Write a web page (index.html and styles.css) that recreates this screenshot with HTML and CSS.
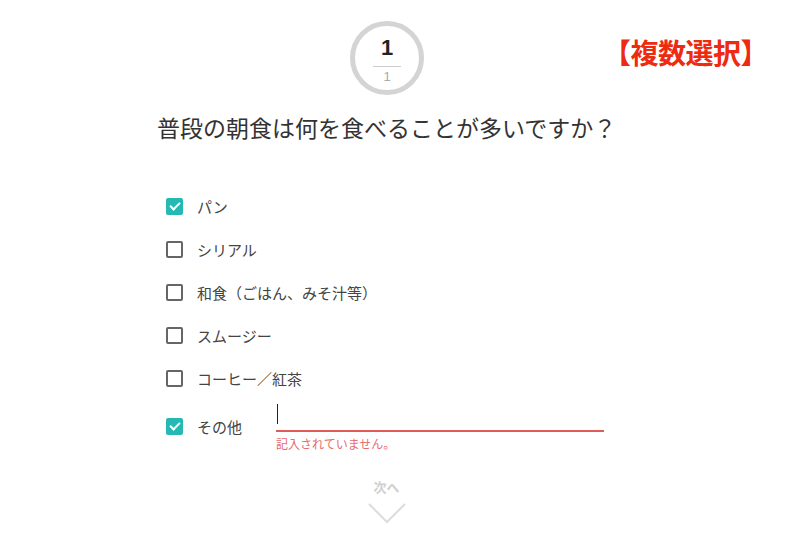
FILE: index.html
```html
<!DOCTYPE html>
<html lang="ja">

<head>
    <meta charset="UTF-8">
    <meta name="viewport" content="width=device-width, initial-scale=1.0">
    <title>Document</title>
    <link rel="stylesheet" href="styles.css">
</head>

<body>
    <div class="page">
        <div class="top">
            <div class="step">
                <span class="step_now">1</span>
                <span class="step_all">1</span>
            </div>
            <span class="multi">【複数選択】</span>
        </div>
        <h1 class="question">普段の朝食は何を食べることが多いですか？</h1>
        <ul class="choices">
            <li><span class="box on"></span>パン</li>
            <li><span class="box"></span>シリアル</li>
            <li><span class="box"></span>和食（ごはん、みそ汁等）</li>
            <li><span class="box"></span>スムージー</li>
            <li><span class="box"></span>コーヒー／紅茶</li>
            <li class="other">
                <span class="box on"></span><span class="other_label">その他</span>
                <div class="field">
                    <div class="input"><i class="caret"></i></div>
                    <p class="error">記入されていません。</p>
                </div>
            </li>
        </ul>
        <div class="next">
            <span>次へ</span>
            <svg width="38" height="20" viewBox="0 0 38 20">
                <polyline points="1,1 19,19 37,1" fill="none" stroke="#dcdcdc" stroke-width="2" />
            </svg>
        </div>
    </div>
</body>

</html>
```

FILE: styles.css
```css
* {
    margin: 0;
    padding: 0;
}

li {
    list-style: none;
}

body {
    background: #fff;
    font-family: "Noto Sans CJK JP", "Noto Sans", sans-serif;
    color: #333;
}

.page {
    width: 800px;
    height: 535px;
    overflow: hidden;
}

.top {
    position: relative;
    height: 96px;
    padding-top: 21px;
    box-sizing: border-box;
}

.step {
    width: 64px;
    height: 64px;
    margin-left: 350px;
    border: 5px solid #d4d4d4;
    border-radius: 50%;
    display: flex;
    flex-direction: column;
    align-items: center;
}

.step_now {
    margin-top: 10px;
    font-family: "Liberation Sans", sans-serif;
    font-weight: bold;
    font-size: 22px;
    line-height: 23px;
    color: #222;
    width: 28px;
    text-align: center;
    border-bottom: 1px solid #ccc;
    padding-bottom: 7px;
}

.step_all {
    margin-top: 3px;
    font-family: "Liberation Sans", sans-serif;
    font-size: 13px;
    line-height: 14px;
    color: #aaa;
}

.multi {
    position: absolute;
    left: 603px;
    top: 35px;
    font-size: 28px;
    line-height: 34px;
    font-weight: bold;
    color: #ee2a10;
    letter-spacing: -0.5px;
}

.question {
    margin-left: 157px;
    margin-top: 15px;
    font-size: 23px;
    font-weight: normal;
    line-height: 32px;
    color: #333;
}

.choices {
    margin-top: 42px;
    margin-left: 166px;
}

.choices li {
    display: flex;
    align-items: center;
    height: 43px;
    font-size: 15px;
    color: #444;
}

.box {
    width: 13px;
    height: 13px;
    border: 2px solid #666;
    border-radius: 2px;
    margin-right: 14px;
    flex-shrink: 0;
    position: relative;
}

.box.on {
    background: #26b8b2;
    border-color: #26b8b2;
}

.box.on::after {
    content: "";
    position: absolute;
    left: 4px;
    top: 0px;
    width: 4px;
    height: 8px;
    border: solid #fff;
    border-width: 0 2px 2px 0;
    transform: rotate(45deg);
}

.choices li.other {
    align-items: flex-start;
    height: 60px;
    padding-top: 17px;
    box-sizing: border-box;
}

.other .box {
    margin-top: 1px;
}

.other_label {
    width: 79px;
    line-height: 19px;
}

.field {
    margin-top: -14px;
}

.input {
    width: 328px;
    height: 26px;
    border-bottom: 2px solid #e05a5a;
}

.caret {
    display: block;
    width: 1px;
    height: 20px;
    margin-left: 1px;
    margin-top: 1px;
    background: #222;
}

.error {
    margin-top: 5px;
    font-size: 12px;
    line-height: 14px;
    color: #e86a6a;
}

.next {
    margin-top: 19px;
    display: flex;
    flex-direction: column;
    align-items: center;
    margin-left: -27px;
    color: #cfcfcf;
    font-size: 13px;
    font-weight: bold;
}

.next span {
    line-height: 16px;
}

.next svg {
    margin-top: 8px;
}
```
